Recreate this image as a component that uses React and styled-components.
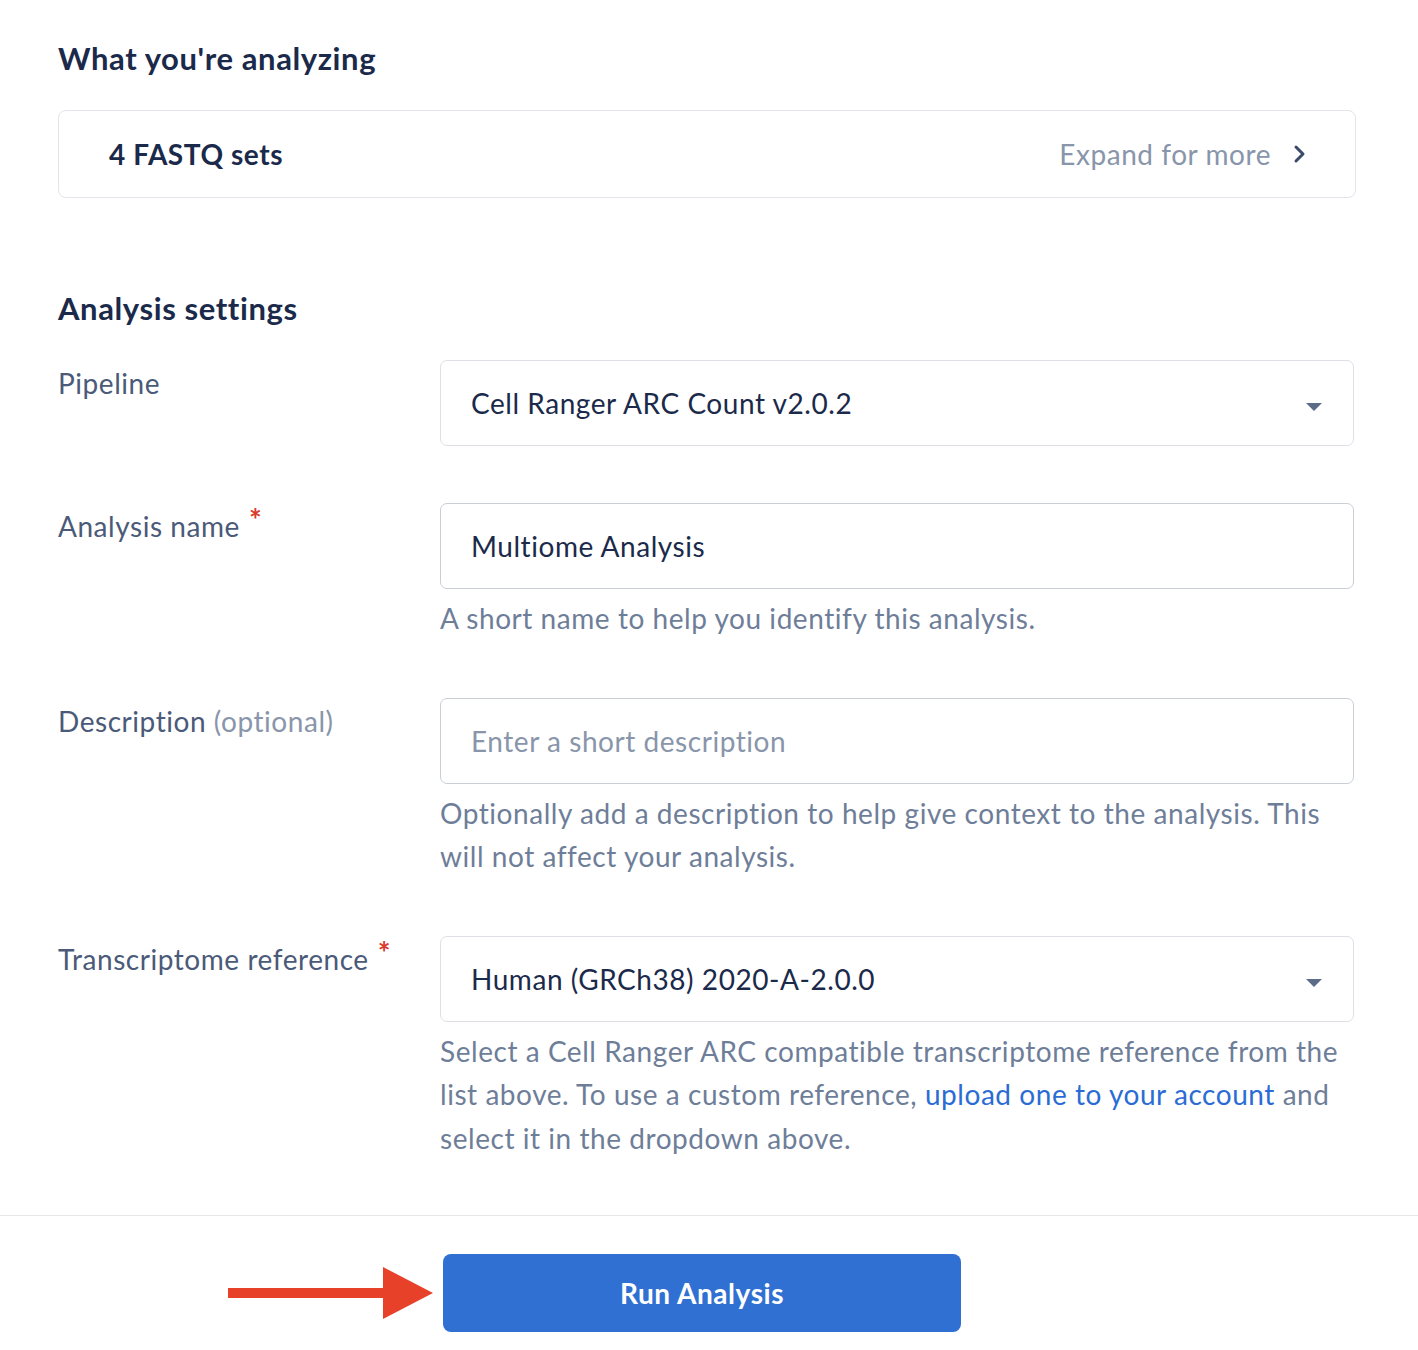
import React from "react";
import styled, { createGlobalStyle } from "styled-components";

const GlobalStyle = createGlobalStyle`
    body {
        margin: 0;
        background: #ffffff;
        font-family: "Lato", "Noto Sans", sans-serif;
        color: #1b2a4a;
        letter-spacing: 0.55px;
    }
`;

const Page = styled.div`
    width: 1418px;
    padding-top: 40px;
`;

const Content = styled.div`
    padding: 0 62px 0 58px;
`;

const SectionTitle = styled.h2`
    margin: 0;
    font-size: 31px;
    line-height: 36px;
    font-weight: 700;
    letter-spacing: 0.6px;
    color: #1b2a4a;
    margin-top: ${props => props.gap || 0}px;
`;

const SummaryCard = styled.div`
    margin-top: 34px;
    height: 88px;
    box-sizing: border-box;
    border: 1px solid #e1e4ea;
    border-radius: 8px;
    display: flex;
    align-items: center;
    justify-content: space-between;
    padding: 0 48px 0 50px;
`;

const SummaryText = styled.span`
    font-size: 28px;
    font-weight: 700;
    color: #1b2a4a;
`;

const ExpandLink = styled.span`
    display: flex;
    align-items: center;
    gap: 22px;
    font-size: 28px;
    color: #8995aa;
`;

const Form = styled.div`
    margin-top: 34px;
    display: flex;
    flex-direction: column;
    gap: 57px;
`;

const Row = styled.div`
    display: grid;
    grid-template-columns: 382px 914px;
`;

const Label = styled.div`
    padding-top: 6px;
    font-size: 28px;
    line-height: 34px;
    color: #4a5a78;
`;

const Optional = styled.span`
    color: #8995aa;
`;

const Required = styled.span`
    color: #d93a2b;
    font-size: 30px;
    font-weight: 700;
    vertical-align: 6px;
    margin-left: 9px;
    line-height: 20px;
`;

const Field = styled.div`
    display: flex;
    flex-direction: column;
`;

const Box = styled.div`
    height: 86px;
    box-sizing: border-box;
    border: 1px solid ${props => props.strong ? "#c9ced7" : "#dde1e7"};
    border-radius: 7px;
    display: flex;
    align-items: center;
    justify-content: space-between;
    padding: 0 30px 0 30px;
    font-size: 28px;
    color: ${props => props.placeholder ? "#8995aa" : "#1b2a4a"};
`;

const Help = styled.div`
    margin-top: 8px;
    font-size: 28px;
    line-height: 43.5px;
    color: #6e7e99;
`;

const Link = styled.a`
    color: #2b6cd4;
    text-decoration: none;
`;

const Footer = styled.div`
    margin-top: 55px;
    border-top: 1px solid #e6e6e6;
    padding: 38px 0 18px 228px;
    display: flex;
    align-items: center;
    gap: 10px;
`;

const RunButton = styled.button`
    width: 518px;
    height: 78px;
    border: none;
    border-radius: 8px;
    background: #3070d3;
    color: #ffffff;
    font-family: "Lato", "Noto Sans", sans-serif;
    font-size: 28px;
    letter-spacing: 0.55px;
    font-weight: 700;
`;

const Caret = () => (
    <svg width="18" height="10" viewBox="0 0 18 10" style={{ marginTop: 8 }}>
        <polygon points="1,1 17,1 9,9" fill="#5b6b88" />
    </svg>
);

const Chevron = () => (
    <svg width="14" height="20" viewBox="0 0 14 20">
        <polyline points="3,3 10,10 3,17" fill="none" stroke="#3b4a6b" strokeWidth="3" strokeLinecap="round" strokeLinejoin="round" />
    </svg>
);

const Arrow = () => (
    <svg width="205" height="52" viewBox="0 0 205 52">
        <rect x="0" y="21" width="160" height="10" fill="#e8412a" />
        <polygon points="155,0 205,26 155,52" fill="#e8412a" />
    </svg>
);

const App = () => (
    <Page>
        <GlobalStyle />
        <Content>
            <SectionTitle>What you're analyzing</SectionTitle>
            <SummaryCard>
                <SummaryText>4 FASTQ sets</SummaryText>
                <ExpandLink>Expand for more <Chevron /></ExpandLink>
            </SummaryCard>

            <SectionTitle gap={92}>Analysis settings</SectionTitle>
            <Form>
                <Row>
                    <Label>Pipeline</Label>
                    <Field>
                        <Box>Cell Ranger ARC Count v2.0.2<Caret /></Box>
                    </Field>
                </Row>
                <Row>
                    <Label>Analysis name<Required>*</Required></Label>
                    <Field>
                        <Box strong>Multiome Analysis</Box>
                        <Help>A short name to help you identify this analysis.</Help>
                    </Field>
                </Row>
                <Row>
                    <Label>Description <Optional>(optional)</Optional></Label>
                    <Field>
                        <Box strong placeholder="true">Enter a short description</Box>
                        <Help>Optionally add a description to help give context to the analysis. This will not affect your analysis.</Help>
                    </Field>
                </Row>
                <Row>
                    <Label>Transcriptome reference<Required>*</Required></Label>
                    <Field>
                        <Box>Human (GRCh38) 2020-A-2.0.0<Caret /></Box>
                        <Help>
                            Select a Cell Ranger ARC compatible transcriptome reference from the list above. To use a custom reference, <Link href="#">upload one to your account</Link> and select it in the dropdown above.
                        </Help>
                    </Field>
                </Row>
            </Form>
        </Content>
        <Footer>
            <Arrow />
            <RunButton>Run Analysis</RunButton>
        </Footer>
    </Page>
);

export default App;
